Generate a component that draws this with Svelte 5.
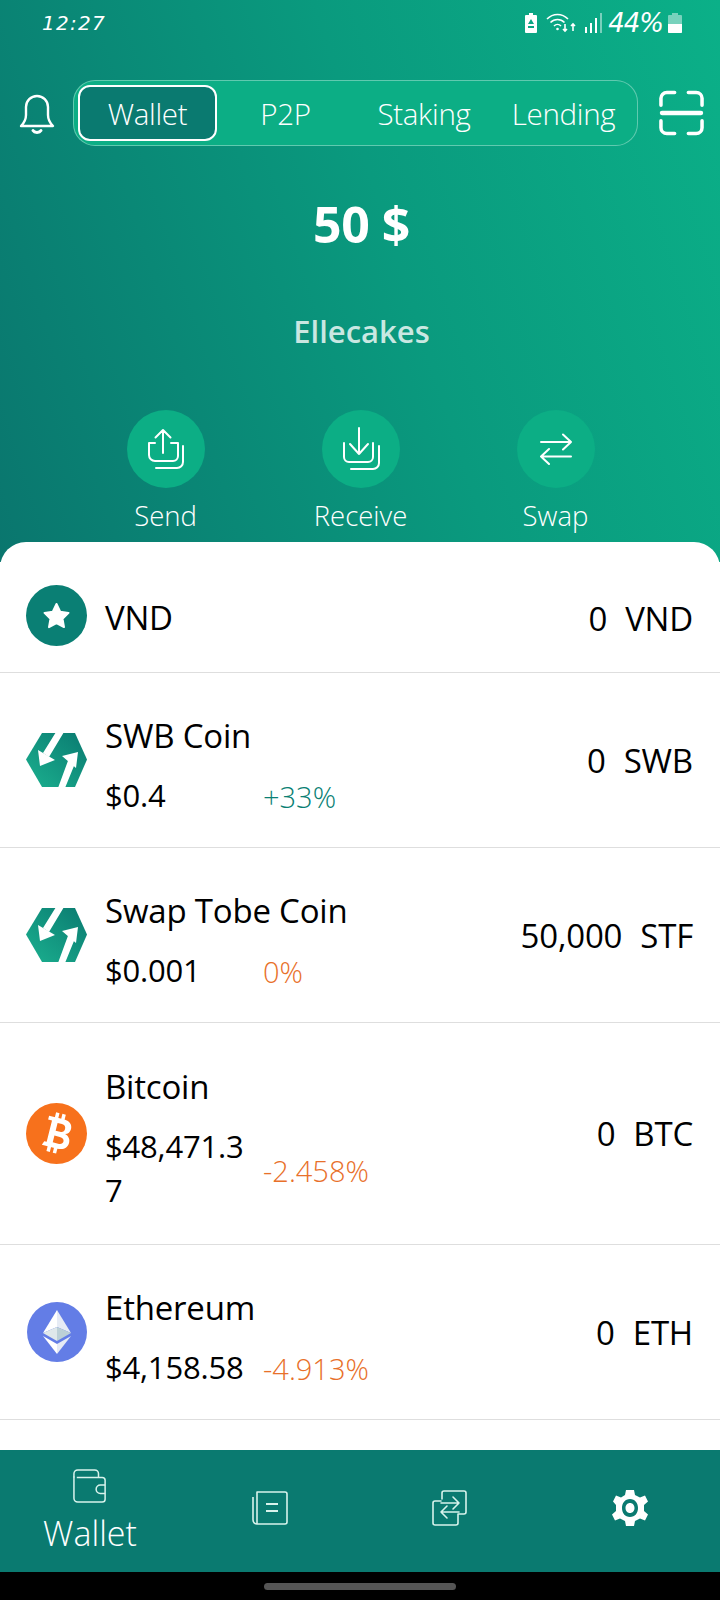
<script>
  const tabs = ['Wallet', 'P2P', 'Staking', 'Lending'];
  let activeTab = $state('Wallet');

  const coins = [
    { name: 'VND', icon: 'vnd', amount: '0', unit: 'VND' },
    { name: 'SWB Coin', icon: 'swb', price: '$0.4', change: '+33%', tone: 'up', amount: '0', unit: 'SWB' },
    { name: 'Swap Tobe Coin', icon: 'swb', price: '$0.001', change: '0%', tone: 'down', amount: '50,000', unit: 'STF' },
    { name: 'Bitcoin', icon: 'btc', price: '$48,471.37', change: '-2.458%', tone: 'down', amount: '0', unit: 'BTC' },
    { name: 'Ethereum', icon: 'eth', price: '$4,158.58', change: '-4.913%', tone: 'down', amount: '0', unit: 'ETH' },
  ];
</script>

<div class="screen">
  <header class="hero">
    <div class="status">
      <span class="clock">12:27</span>
      <div class="status-right">
        <svg width="12" height="20" viewBox="0 0 12 20"><path d="M4 0h4v2h3a1 1 0 0 1 1 1v16a1 1 0 0 1-1 1H1a1 1 0 0 1-1-1V3a1 1 0 0 1 1-1h3z" fill="#fff"/><path d="M6 6l3 5H3zM3 13h6v2H3z" fill="#0aa583"/></svg>
        <svg class="wifi" width="34" height="22" viewBox="0 0 34 22" fill="none" stroke="#fff" stroke-width="1.6"><path d="M1 7c6-6 15-6 21 0M4.500 10.500c4-4 10-4 14 0M8 14c2-2 5-2 7 0"/><circle cx="11.500" cy="17" r="1.300" fill="#fff" stroke="none"/><path d="M19 12v7M17 17l2 2 2-2M27 19v-7M25 14l2-2 2 2"/></svg>
        <svg width="18" height="22" viewBox="0 0 18 22" fill="#fff"><rect x="0" y="15" width="2" height="6"/><rect x="5" y="11" width="2" height="10"/><rect x="10" y="6" width="2" height="15"/><rect x="15" y="1" width="2" height="20" opacity=".45"/></svg>
        <span class="pct">44%</span>
        <svg width="14" height="20" viewBox="0 0 14 20"><path d="M4 0h6v2h3a1 1 0 0 1 1 1v16a1 1 0 0 1-1 1H1a1 1 0 0 1-1-1V3a1 1 0 0 1 1-1h3z" fill="#fff" opacity=".45"/><path d="M0 11h14v8a1 1 0 0 1-1 1H1a1 1 0 0 1-1-1z" fill="#fff"/></svg>
      </div>
    </div>

    <div class="topbar">
      <svg class="bell" width="36" height="42" viewBox="0 0 36 42" fill="none" stroke="#fff" stroke-width="2.400" stroke-linejoin="round"><path d="M2 34c3-3 5-6 5-11v-8a11 11 0 0 1 22 0v8c0 5 2 8 5 11z"/><path d="M14 38.500c1.500 2.500 6.500 2.500 8 0" stroke-width="3" stroke-linecap="round"/></svg>
      <nav class="tabs">
        {#each tabs as tab}
          <button class="tab" class:active={activeTab === tab} onclick={() => (activeTab = tab)}>{tab}</button>
        {/each}
      </nav>
      <svg class="scan" width="45" height="46" viewBox="0 0 46 46" fill="none" stroke="#fff" stroke-width="3.600" stroke-linecap="round"><path d="M16 2H8a6 6 0 0 0-6 6v7M30 2h8a6 6 0 0 1 6 6v7M16 44H8a6 6 0 0 1-6-6v-7M30 44h8a6 6 0 0 0 6-6v-7"/><path d="M3 23h40" stroke-width="4.400"/></svg>
    </div>

    <div class="balance">50 $</div>
    <div class="username">Ellecakes</div>

    <div class="actions">
      <div class="action">
        <span class="circle">
          <svg width="38" height="42" viewBox="0 0 38 42" fill="none" stroke="#fff" stroke-width="2" stroke-linecap="round" stroke-linejoin="round"><path d="M16 2v23M8.500 9.500L16 2l7.500 7.500M8 15H2v12a6 6 0 0 0 6 6h18a5 5 0 0 0 5-5V15h-7"/><path d="M9 40h21a6 6 0 0 0 6-6V18"/></svg>
        </span>
        <span class="action-label">Send</span>
      </div>
      <div class="action">
        <span class="circle">
          <svg width="38" height="44" viewBox="0 0 38 44" fill="none" stroke="#fff" stroke-width="2" stroke-linecap="round" stroke-linejoin="round"><path d="M17 1v26M8 17l9 10 9-10M2 16v14a5 5 0 0 0 5 5h19a5 5 0 0 0 5-5V16"/><path d="M9 42h22a6 6 0 0 0 6-6V19"/></svg>
        </span>
        <span class="action-label">Receive</span>
      </div>
      <div class="action">
        <span class="circle">
          <svg width="32" height="32" viewBox="0 0 32 32" fill="none" stroke="#fff" stroke-width="2" stroke-linecap="round" stroke-linejoin="round"><path d="M1 9h30M23 1.500L31 9l-8 7.500M31 23.500H1M9 16l-8 7.500L9 31"/></svg>
        </span>
        <span class="action-label">Swap</span>
      </div>
    </div>
  </header>

  <main class="list">
    {#each coins as coin}
      <div class="row" class:single={!coin.price}>
        <div class="coin-icon">
          {#if coin.icon === 'vnd'}
            <svg width="61" height="61" viewBox="0 0 61 61"><circle cx="30.500" cy="30.500" r="30.500" fill="#0a7f74"/><path d="M30.500 19l3.700 7.800 8.300 1.100-6 5.800 1.500 8.400-7.500-4-7.500 4 1.500-8.400-6-5.800 8.300-1.100z" fill="#fff" stroke="#fff" stroke-width="2" stroke-linejoin="round"/></svg>
          {:else if coin.icon === 'swb'}
            <svg width="61" height="54" viewBox="0 0 61 54">
              <defs><linearGradient id="swb-fill" x1="0" y1="1" x2="1" y2="0"><stop offset="0" stop-color="#1bb08f"/><stop offset="1" stop-color="#0a7a70"/></linearGradient></defs>
              <path d="M16 0h33l12 26.500L49 54H16L0 26.500z" fill="url(#swb-fill)"/>
              <path d="M30-1h8L23 24l-6-4zM32 55h7l11-27-7-3z" fill="#fff"/>
              <path d="M12 17l2 16 15-6zM36 23l16-4-2 16z" fill="#fff"/>
            </svg>
          {:else if coin.icon === 'btc'}
            <svg width="61" height="61" viewBox="0 0 61 61">
              <circle cx="30.500" cy="30.500" r="30.500" fill="#f7711c"/>
              <g transform="rotate(14 30.500 30.500)" fill="#fff">
                <path fill-rule="evenodd" d="M19 15h15c6 0 9.500 3 9.500 7.500 0 3.200-1.700 5.500-4.500 6.500 3.500 1 6 3.600 6 7.500 0 5.500-4 8.500-10 8.500H19l1.500-4h2.500V19h-4zM29 20v8h4.500c2.700 0 4.200-1.500 4.200-4s-1.500-4-4.200-4zM29 33v7h5.500c3 0 4.700-1.300 4.700-3.500s-1.700-3.500-4.700-3.500z"/>
                <rect x="25" y="10" width="3.500" height="6"/><rect x="31.500" y="10" width="3.500" height="6"/>
                <rect x="25" y="44" width="3.500" height="6"/><rect x="31.500" y="44" width="3.500" height="6"/>
              </g>
            </svg>
          {:else}
            <svg width="60" height="60" viewBox="0 0 60 60">
              <circle cx="30" cy="30" r="30" fill="#637de6"/>
              <path d="M30 8L16 31l14-6z" fill="#fff"/>
              <path d="M30 8l14 23-14-6z" fill="#e6ebf5"/>
              <path d="M30 25L16 31l14 8z" fill="#dfe8ea"/>
              <path d="M30 25l14 6-14 8z" fill="#bcd0d6"/>
              <path d="M16 34l14 18V42z" fill="#fff"/>
              <path d="M44 34L30 52V42z" fill="#e6ebf5"/>
            </svg>
          {/if}
        </div>
        <div class="coin-info">
          <div class="coin-name">{coin.name}</div>
          {#if coin.price}
            <div class="coin-sub">
              <span class="price">{coin.price}</span>
              <span class="change {coin.tone}">{coin.change}</span>
            </div>
          {/if}
        </div>
        <div class="coin-amount"><span>{coin.amount}</span><span>{coin.unit}</span></div>
      </div>
    {/each}
  </main>

  <footer class="bottom-nav">
    <div class="nav-item">
      <svg width="34" height="36" viewBox="0 0 36 36" fill="none" stroke="#d8f3ec" stroke-width="1.600" stroke-linejoin="round"><path d="M1 9V5a4 4 0 0 1 4-4h18a4 4 0 0 1 4 4v4"/><path d="M4 9h27a3 3 0 0 1 3 3v20a3 3 0 0 1-3 3H5a4 4 0 0 1-4-4V8"/><path d="M34 17h-5a4.500 4.500 0 0 0 0 9h5"/></svg>
      <span class="nav-label">Wallet</span>
    </div>
    <div class="nav-item">
      <svg width="36" height="36" viewBox="0 0 36 36" fill="none" stroke="#d8f3ec" stroke-width="1.600" stroke-linejoin="round"><path d="M5 2h28a2 2 0 0 1 2 2v28a2 2 0 0 1-2 2H5zM5 34a4 4 0 0 1-4-4V7"/><path d="M14 14h12M14 21h12" stroke-width="2"/></svg>
    </div>
    <div class="nav-item">
      <svg width="36" height="36" viewBox="0 0 36 36" fill="none" stroke="#d8f3ec" stroke-width="1.600" stroke-linecap="round" stroke-linejoin="round"><path d="M10 9V3a2 2 0 0 1 2-2h20a2 2 0 0 1 2 2v19a2 2 0 0 1-2 2h-6v9a2 2 0 0 1-2 2H3a2 2 0 0 1-2-2V13a2 2 0 0 1 2-2h6"/><path d="M9 13h18M21 7l6 6-6 6M27 22H9M15 16l-6 6 6 6"/></svg>
    </div>
    <div class="nav-item">
      <svg width="36" height="36" viewBox="0 0 36 36"><path fill="#fff" fill-rule="evenodd" d="M14 0h8l1 5 5 2.500 5-2 3 6-4 3.500v6l4 3.500-3 6-5-2-5 2.500-1 5h-8l-1-5-5-2.500-5 2-3-6 4-3.500v-6L1 11.500l3-6 5 2 4-2.500zM18 9c-5 0-8 4-8 9s3 9 8 9 8-4 8-9-3-9-8-9zM18 13c2.800 0 4.500 2.200 4.500 5s-1.700 5-4.500 5-4.500-2.200-4.500-5 1.700-5 4.500-5z"/></svg>
    </div>
  </footer>

  <div class="system-bar"><span class="home-pill"></span></div>
</div>

<style>
  :global(body) {
    margin: 0;
    background: #fff;
  }

  .screen {
    width: 720px;
    height: 1600px;
    display: flex;
    flex-direction: column;
    overflow: hidden;
    font-family: 'Open Sans', 'Noto Sans', sans-serif;
    color: #000;
  }

  .hero {
    height: 562px;
    flex: none;
    box-sizing: border-box;
    padding: 8px 16px 0 19px;
    background: linear-gradient(72deg, #0a766e 0%, #0a9a7e 55%, #0bb088 100%);
    color: #fff;
  }

  .status {
    display: flex;
    justify-content: space-between;
    align-items: center;
    height: 30px;
    padding: 0 22px 0 23px;
  }

  .clock, .pct {
    font-family: 'DejaVu Sans', sans-serif;
    font-weight: 200;
    font-style: italic;
  }

  .clock {
    font-size: 20px;
    letter-spacing: 1.300px;
  }

  .status-right {
    display: flex;
    align-items: center;
    gap: 5px;
  }

  .pct {
    font-size: 26px;
    letter-spacing: -1px;
  }

  .wifi {
    margin-left: 4px;
  }

  .topbar {
    display: flex;
    align-items: center;
    margin-top: 42px;
    height: 66px;
  }

  .bell {
    flex: none;
    margin-right: 18px;
  }

  .tabs {
    flex: none;
    box-sizing: border-box;
    width: 565px;
    height: 66px;
    display: grid;
    grid-template-columns: 139px 137px 140px 1fr;
    align-items: center;
    padding: 0 4px;
    border: 1px solid rgba(255, 255, 255, 0.35);
    border-radius: 22px;
    background: #0cae85;
  }

  .tab {
    height: 56px;
    padding: 0;
    border: 2px solid transparent;
    border-radius: 12px;
    background: none;
    color: #fff;
    font: 300 29.500px 'Open Sans', sans-serif;
    letter-spacing: -0.3px;
  }

  .tab.active {
    border-color: #fff;
    background: #0a7a70;
  }

  .scan {
    flex: none;
    margin-left: 21px;
  }

  .balance {
    margin-top: 49px;
    text-align: center;
    font-size: 50px;
    line-height: 58px;
    font-weight: 700;
    letter-spacing: -0.5px;
  }

  .username {
    margin-top: 56px;
    text-align: center;
    font-size: 31px;
    line-height: 44px;
    font-weight: 600;
    color: rgba(255, 255, 255, 0.78);
  }

  .actions {
    display: grid;
    grid-template-columns: repeat(3, 195px);
    justify-content: center;
    margin-top: 57px;
    margin-left: -2px;
  }

  .action {
    display: flex;
    flex-direction: column;
    align-items: center;
  }

  .circle {
    width: 78px;
    height: 78px;
    display: flex;
    align-items: center;
    justify-content: center;
    border-radius: 50%;
    background: #0cae85;
  }

  .action-label {
    margin-top: 9px;
    font-size: 27.500px;
    line-height: 38px;
    font-weight: 300;
  }

  .list {
    flex: 1;
    margin-top: -20px;
    border-radius: 26px 26px 0 0;
    background: #fff;
  }

  .row {
    height: 174px;
    display: flex;
    align-items: center;
    padding: 0 27px 0 26px;
    border-bottom: 1px solid #dedede;
  }

  .row.single {
    height: 114px;
    padding-top: 16px;
  }

  .row:nth-child(4) {
    height: 221px;
  }

  .coin-icon {
    flex: none;
    width: 61px;
    display: flex;
    justify-content: center;
    margin-right: 18px;
  }

  .coin-info {
    flex: 1;
    min-width: 0;
    padding-top: 10px;
  }

  .single .coin-info,
  .single .coin-amount {
    padding-top: 6px;
  }

  .coin-name {
    font-size: 33px;
    line-height: 44px;
    font-weight: 500;
    letter-spacing: -0.2px;
  }

  .coin-sub {
    display: flex;
    align-items: center;
    margin-top: 15px;
  }

  .price {
    flex: none;
    width: 150px;
    margin-right: 8px;
    font-size: 31px;
    line-height: 44px;
    font-weight: 400;
    letter-spacing: -0.2px;
    word-break: break-all;
  }

  .change {
    margin-top: 4px;
    font-size: 29px;
    font-weight: 300;
  }

  .change.up {
    color: #0a7f74;
  }

  .change.down {
    color: #e8702a;
  }

  .coin-amount {
    flex: none;
    display: flex;
    gap: 18px;
    font-size: 33px;
    font-weight: 500;
    letter-spacing: -0.2px;
  }

  .bottom-nav {
    flex: none;
    height: 122px;
    display: grid;
    grid-template-columns: repeat(4, 180px);
    background: #0a7a70;
  }

  .nav-item {
    display: flex;
    flex-direction: column;
    align-items: center;
    padding-top: 18px;
    color: #fff;
  }

  .nav-item:not(:first-child) {
    padding-top: 40px;
  }

  .nav-label {
    margin-top: 6px;
    font-size: 34px;
    line-height: 46px;
    font-weight: 300;
  }

  .system-bar {
    flex: none;
    height: 28px;
    display: flex;
    align-items: center;
    justify-content: center;
    background: #000;
  }

  .home-pill {
    width: 192px;
    height: 7px;
    border-radius: 4px;
    background: #555;
  }
</style>
